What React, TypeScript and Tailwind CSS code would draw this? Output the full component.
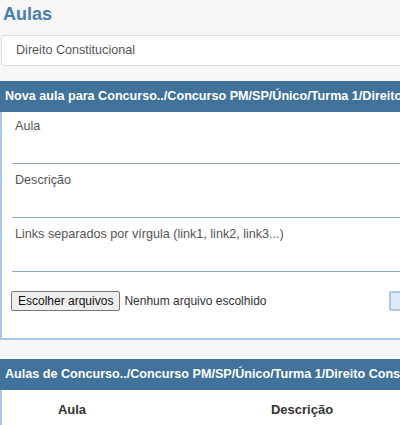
import React from "react";

const font = { fontFamily: '"Liberation Sans", Arial, sans-serif' };

function Field({ label, first }: { label: string; first?: boolean }) {
  return (
    <div className={first ? "pt-[6px] ml-[10px]" : "mt-[8px] ml-[10px]"}>
      <div className="pl-[3px] text-[12.6px] leading-[16px] text-[#555]">{label}</div>
      <div className="h-[30px] border-b border-[#94a5bd]" />
    </div>
  );
}

export default function App() {
  return (
    <div className="h-[425px] w-[400px] overflow-hidden bg-[#f7f7f7]" style={font}>
      <div className="w-[600px]">
        <h1 className="pl-[3px] pt-[3px] text-[18px] font-bold leading-[22px] text-[#4a7fab]">Aulas</h1>

        <div className="ml-[1px] mt-[10px] flex h-[31px] items-center rounded-[4px] border border-[#dcdcdc] bg-white pl-[14px] text-[12.6px] text-[#555]">
          Direito Constitucional
        </div>

        <section className="mt-[15px] border-b-2 border-l-2 border-[#a9c8ec] bg-white">
          <div className="-ml-[2px] flex h-[31px] items-center bg-[#40729c] pl-[5px] text-[12.6px] font-bold text-white whitespace-nowrap">
            Nova aula para Concurso../Concurso PM/SP/Único/Turma 1/Direito Constitucional
          </div>
          <Field label="Aula" first />
          <Field label="Descrição" />
          <Field label="Links separados por vírgula (link1, link2, link3...)" />
          <div className="mt-[18px] flex h-[22px] items-center whitespace-nowrap pl-[9px] text-[12px] text-[#333]">
            <span className="shrink-0 rounded-[2px] border border-[#767676] bg-[#efefef] px-[6px] leading-[18px] text-[#111]">
              Escolher arquivos
            </span>
            <span className="ml-[4px] shrink-0 text-[#333]">Nenhum arquivo escolhido</span>
            <span className="ml-[123px] h-[20px] w-[80px] shrink-0 rounded-[2px] border-2 border-[#a9c8ec] bg-[#e1ebf6]" />
          </div>
          <div className="h-[26px]" />
        </section>

        <section className="mt-[19px] border-l-2 border-[#a9c8ec] bg-white">
          <div className="-ml-[2px] flex h-[31px] items-center bg-[#40729c] pl-[5px] text-[12.6px] font-bold text-white whitespace-nowrap">
            Aulas de Concurso../Concurso PM/SP/Único/Turma 1/Direito Constitucional
          </div>
          <div className="flex h-[40px] items-center text-[13px] font-bold text-[#333]">
            <div className="w-[140px] text-center">Aula</div>
            <div className="w-[320px] text-center">Descrição</div>
          </div>
        </section>
      </div>
    </div>
  );
}
